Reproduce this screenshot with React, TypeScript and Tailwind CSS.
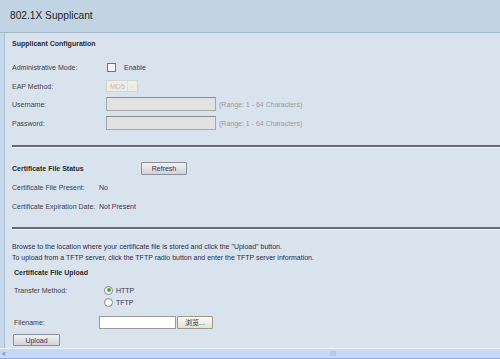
import React from "react";

const lab = "text-[#3f3f46]";
const val = "text-[#3d2f5c]";

function Btn({ children, className = "" }: { children: React.ReactNode; className?: string }) {
  return (
    <div
      className={
        "flex items-center justify-center border border-[#8d9097] rounded-[1px] bg-gradient-to-b from-[#f2f2f2] to-[#cfd2d8] text-[#3d2f5c] text-[7px] " +
        className
      }
    >
      {children}
    </div>
  );
}

function Radio({ checked }: { checked?: boolean }) {
  return (
    <div className="w-[9px] h-[9px] rounded-full border border-[#7a8591] bg-white flex items-center justify-center">
      {checked && <div className="w-[4px] h-[4px] rounded-full bg-[#3fa23a]" />}
    </div>
  );
}

export default function App() {
  return (
    <div
      className="w-[500px] h-[359px] overflow-hidden flex flex-col bg-[#d8e3ee] text-[7px] leading-none"
      style={{ fontFamily: '"Liberation Sans", Arial, "Noto Sans CJK SC", sans-serif' }}
    >
      <div className="h-[33px] shrink-0 bg-[#c1d4e4] border-b border-[#a3b5c4] flex items-center pl-[10px]">
        <span className="text-[10.2px] text-[#1f1f24]">802.1X Supplicant</span>
      </div>
      <div className="flex-1 flex min-h-0">
        <div className="w-[5px] bg-[#c6d8ec] border-r border-[#a9bdd2] shrink-0" />
        <div className="flex-1 flex flex-col pl-[7px]">
          <div className="h-[20px] flex items-center font-bold text-[#2a2a30]">Supplicant Configuration</div>
          <div className="h-[18px] mt-[5px] flex items-center">
            <span className={"w-[95px] " + lab}>Administrative Mode:</span>
            <div className="w-[9px] h-[9px] border border-[#6f7680] bg-[#f4f6f8]" />
            <span className={"ml-[8px] " + val}>Enable</span>
          </div>
          <div className="h-[18px] mt-[1px] flex items-center">
            <span className={"w-[94px] " + lab}>EAP Method:</span>
            <div className="w-[32px] h-[12px] border border-[#d5d5cf] bg-[#eeeee8] flex items-center">
              <span className="pl-[3px] text-[#c0c0b8] flex-1">MD5</span>
              <span className="w-[10px] h-full border-l border-[#dcdcd6] text-[#c0c0b8] text-[6px] flex items-center justify-center">⌵</span>
            </div>
          </div>
          <div className="h-[18px] flex items-center">
            <span className={"w-[94px] " + lab}>Username:</span>
            <div className="w-[110px] h-[14px] border border-[#a7a7a7] border-t-[#8c8c8c] bg-[#e2e2e2]" />
            <span className="ml-[3px] text-[#9b9b9b]">(Range: 1 - 64 Characters)</span>
          </div>
          <div className="h-[18px] mt-[1px] flex items-center">
            <span className={"w-[94px] " + lab}>Password:</span>
            <div className="w-[110px] h-[14px] border border-[#a7a7a7] border-t-[#8c8c8c] bg-[#e2e2e2]" />
            <span className="ml-[3px] text-[#9b9b9b]">(Range: 1 - 64 Characters)</span>
          </div>
          <div className="mt-[13px] h-[2px] bg-[#686c72] border-b border-[#f0f4f8] box-content" />
          <div className="h-[20px] mt-[10px] flex items-center">
            <span className="w-[129px] font-bold text-[#2a2a30]">Certificate File Status</span>
            <Btn className="w-[46px] h-[13px]">Refresh</Btn>
          </div>
          <div className="h-[18px] flex items-center">
            <span className={"w-[87px] " + lab}>Certificate File Present:</span>
            <span className={val}>No</span>
          </div>
          <div className="h-[18px] mt-[1px] flex items-center">
            <span className={"w-[87px] " + lab}>Certificate Expiration Date:</span>
            <span className={val}>Not Present</span>
          </div>
          <div className="mt-[12px] h-[2px] bg-[#686c72] border-b border-[#f0f4f8] box-content" />
          <div className="mt-[11px] leading-[11px] text-[#2f2a4a]">
            <div>Browse to the location where your certificate file is stored and click the "Upload" button.</div>
            <div>To upload from a TFTP server, click the TFTP radio button and enter the TFTP server information.</div>
          </div>
          <div className="h-[18px] flex items-center pl-[2px] font-bold text-[#2a2a30]">Certificate File Upload</div>
          <div className="mt-[3px] flex pl-[2px]">
            <span className={"w-[90px] h-[12px] flex items-center " + lab}>Transfer Method:</span>
            <div className="flex flex-col">
              <div className="h-[12px] flex items-center">
                <Radio checked />
                <span className={"ml-[3px] " + val}>HTTP</span>
              </div>
              <div className="h-[12px] flex items-center">
                <Radio />
                <span className={"ml-[3px] " + val}>TFTP</span>
              </div>
            </div>
          </div>
          <div className="h-[16px] mt-[6px] flex items-center pl-[2px]">
            <span className={"w-[85px] " + lab}>Filename:</span>
            <div className="w-[77px] h-[13px] border border-[#9a9a9a] bg-white" />
            <div className="w-[36px] h-[13px] ml-[1px] border border-[#9d9a8c] rounded-[1px] bg-gradient-to-b from-[#fbfaf4] to-[#e6e2d2] flex items-center justify-center text-[#2f2a4a] text-[7px]">
              浏览...
            </div>
          </div>
          <div className="mt-[4px] pl-[1px]">
            <Btn className="w-[47px] h-[12px]">Upload</Btn>
          </div>
        </div>
      </div>
      <div className="h-[11px] shrink-0 bg-[#c6d8f8] border-t border-[#eef3fb] border-b border-b-[#93aedc] flex items-center relative">
        <span className="pl-[2px] text-[#4a5a80] text-[7px]">&lt;</span>
        <div className="absolute left-[330px] top-[2px] w-[6px] h-[5px] bg-[#b5c9ee]" />
      </div>
    </div>
  );
}
